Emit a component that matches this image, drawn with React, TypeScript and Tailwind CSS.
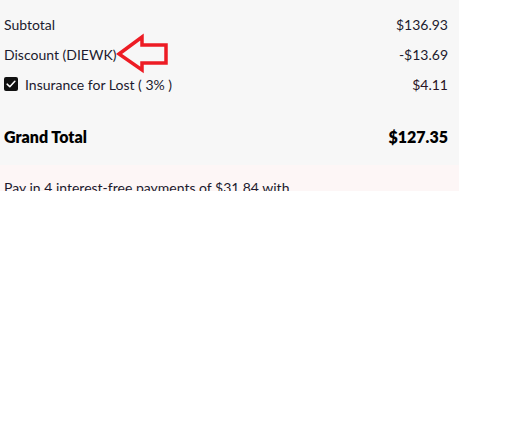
import React from 'react';

const rows = [
  { label: 'Subtotal', value: '$136.93' },
  { label: 'Discount (DIEWK)', value: '-$13.69' },
];

const CheckMark: React.FC = () => (
  <span className="flex h-[14px] w-[14px] items-center justify-center rounded-[2px] bg-[#111]">
    <svg viewBox="0 0 14 14" className="h-[12px] w-[12px]" fill="none">
      <path d="M2.5 7.2 L5.6 10.2 L11.5 3.8" stroke="#fff" strokeWidth="1.8" strokeLinecap="round" strokeLinejoin="round" />
    </svg>
  </span>
);

const App: React.FC = () => {
  return (
    <div className="relative h-[436px] w-[520px] bg-white font-['Lato',sans-serif] text-[#1c1a2e]">
      <div className="relative h-[191px] w-[459px] overflow-hidden">
        {/* Summary */}
        <div className="bg-[#f7f7f7] pl-[4px] pr-[11px] pt-[9px]">
          {rows.map((r) => (
            <div key={r.label} className="flex h-[30px] items-center justify-between text-[14px]">
              <span>{r.label}</span>
              <span>{r.value}</span>
            </div>
          ))}
          <div className="flex h-[30px] items-center justify-between text-[14px]">
            <label className="flex items-center gap-[7px]">
              <CheckMark />
              <span>Insurance for Lost ( 3% )</span>
            </label>
            <span className="text-[#2a1424]">$4.11</span>
          </div>
          <div className="flex h-[66px] items-center justify-between pb-[6px] pt-[15px] text-[16px] font-extrabold text-black">
            <span>Grand Total</span>
            <span>$127.35</span>
          </div>
        </div>

        {/* Pay in 4 */}
        <div className="bg-[#fdf6f6] pl-[4px] pt-[13px] text-[14px] leading-[20px]">
          Pay in 4 interest-free payments of $31.84 with
        </div>

        {/* annotation arrow */}
        <svg className="absolute left-[115px] top-[33px] h-[42px] w-[56px]" viewBox="0 0 56 42" fill="none">
          <polygon
            points="4,21 27,4 27,12 51,12 51,30 27,30 27,37"
            stroke="#ed1c24"
            strokeWidth="3.5"
            strokeLinejoin="miter"
          />
        </svg>
      </div>
    </div>
  );
};

export default App;
